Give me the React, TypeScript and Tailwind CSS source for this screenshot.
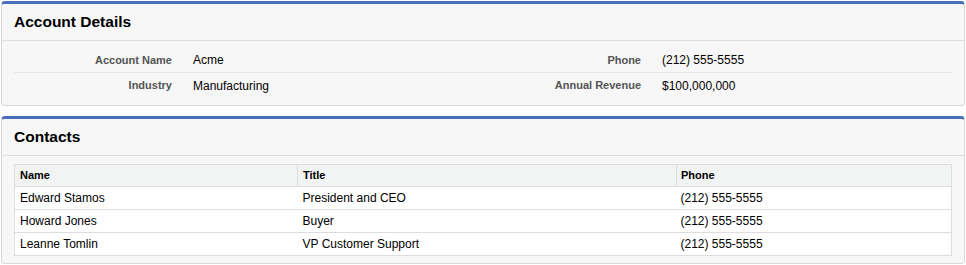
const account = [
    { left: ["Account Name", "Acme"], right: ["Phone", "(212) 555-5555"] },
    { left: ["Industry", "Manufacturing"], right: ["Annual Revenue", "$100,000,000"] },
];

const contacts = [
    { name: "Edward Stamos", title: "President and CEO", phone: "(212) 555-5555" },
    { name: "Howard Jones", title: "Buyer", phone: "(212) 555-5555" },
    { name: "Leanne Tomlin", title: "VP Customer Support", phone: "(212) 555-5555" },
];

const Field = ({ label, value }: { label: string; value: string }) => {
    return (
        <div className="flex w-1/2 items-center">
            <span className="w-[158px] shrink-0 text-right text-[11px] font-bold text-[#545454]">{label}</span>
            <span className="pl-[21px] text-[12px] text-black">{value}</span>
        </div>
    );
};

const Card = ({ title, children }: { title: string; children: React.ReactNode }) => {
    return (
        <section className="rounded-[4px] border border-t-[3px] border-[#d8d8d8] border-t-[#4a6fbd] bg-[#f7f7f7]">
            <header className="flex h-[37px] items-center border-b border-[#dddddd] px-[12px]">
                <h2 className="text-[15.5px] font-bold text-black">{title}</h2>
            </header>
            {children}
        </section>
    );
};

const App = () => {
    return (
        <main className="flex w-[966px] flex-col gap-[10px] pl-px pr-[1px] pt-px font-['Liberation_Sans',Arial,sans-serif]">
            <Card title="Account Details">
                <div className="px-[12px] pb-[7px] pt-[7px]">
                    {account.map((row, i) => (
                        <div key={i} className={`flex h-[25px] ${i === 0 ? "border-b border-[#e6e6e6]" : ""}`}>
                            <Field label={row.left[0]} value={row.left[1]} />
                            <Field label={row.right[0]} value={row.right[1]} />
                        </div>
                    ))}
                </div>
            </Card>
            <Card title="Contacts">
                <div className="px-[12px] pb-[7px] pt-[8px]">
                    <table className="w-full table-fixed border border-[#dddddd] bg-white text-left">
                        <thead>
                            <tr className="h-[22px] bg-[#f2f3f3] text-[11px] font-bold text-black">
                                <th className="w-[283px] border-r border-[#dddddd] px-[5px] font-bold">Name</th>
                                <th className="w-[379px] border-r border-[#dddddd] px-[5px] font-bold">Title</th>
                                <th className="px-[4px] font-bold">Phone</th>
                            </tr>
                        </thead>
                        <tbody>
                            {contacts.map((c) => (
                                <tr key={c.name} className="h-[23px] border-t border-[#dddddd] text-[12px] text-black">
                                    <td className="px-[5px]">{c.name}</td>
                                    <td className="px-[5px]">{c.title}</td>
                                    <td className="px-[4px]">{c.phone}</td>
                                </tr>
                            ))}
                        </tbody>
                    </table>
                </div>
            </Card>
        </main>
    );
};

export default App;
